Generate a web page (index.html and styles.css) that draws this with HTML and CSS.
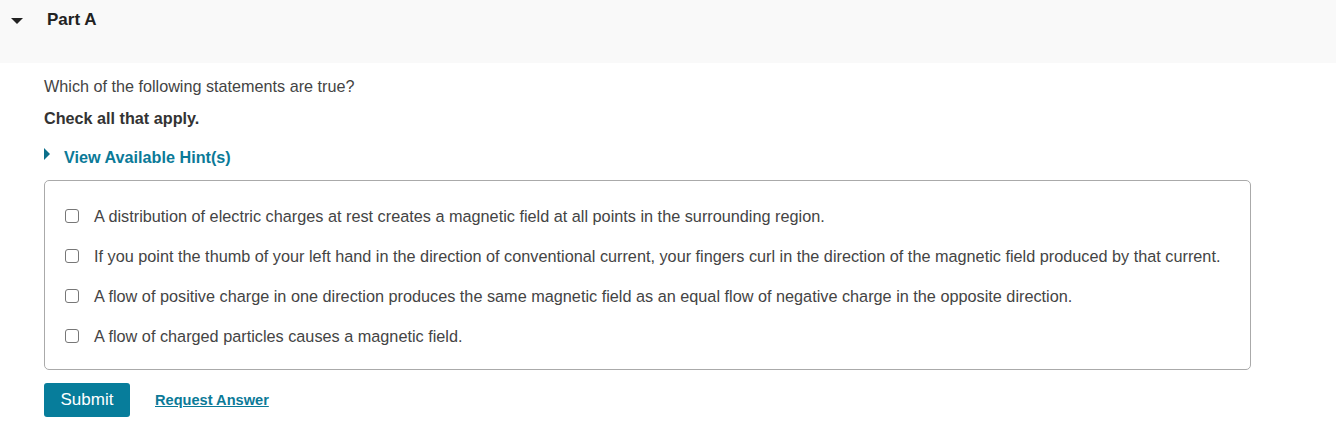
FILE: index.html
```html
<!DOCTYPE html>
<html>
<head>
<meta charset="utf-8">
<link rel="stylesheet" href="styles.css">
</head>
<body>
<div class="part-header">
  <span class="caret-down"></span>
  <span class="part-title">Part A</span>
</div>
<div class="part-body">
  <p class="question">Which of the following statements are true?</p>
  <p class="instruction">Check all that apply.</p>
  <div class="hint"><span class="caret-right"></span><a class="hint-link">View Available Hint(s)</a></div>
  <div class="answer-box">
    <label class="option"><span class="checkbox"></span><span>A distribution of electric charges at rest creates a magnetic field at all points in the surrounding region.</span></label>
    <label class="option"><span class="checkbox"></span><span>If you point the thumb of your left hand in the direction of conventional current, your fingers curl in the direction of the magnetic field produced by that current.</span></label>
    <label class="option"><span class="checkbox"></span><span>A flow of positive charge in one direction produces the same magnetic field as an equal flow of negative charge in the opposite direction.</span></label>
    <label class="option"><span class="checkbox"></span><span>A flow of charged particles causes a magnetic field.</span></label>
  </div>
  <div class="actions">
    <button class="submit">Submit</button>
    <a class="request">Request Answer</a>
  </div>
</div>
</body>
</html>
```
FILE: styles.css
```css
html, body {
  margin: 0;
  padding: 0;
  background: #fff;
  font-family: "Liberation Sans", Arial, sans-serif;
  color: #333;
}
.part-header {
  height: 63px;
  background: #f9f9f9;
  display: flex;
  align-items: flex-start;
  padding-top: 11px;
  box-sizing: border-box;
}
.caret-down {
  width: 0;
  height: 0;
  border-left: 6px solid transparent;
  border-right: 6px solid transparent;
  border-top: 6px solid #222;
  margin: 7px 0 0 11px;
}
.part-title {
  font-size: 17px;
  font-weight: bold;
  color: #222;
  margin-left: 24px;
  line-height: 18px;
}
.part-body {
  padding-left: 44px;
}
.question {
  margin: 0;
  padding-top: 14px;
  font-size: 16.2px;
  line-height: 18px;
  color: #444;
}
.instruction {
  margin: 14px 0 0 0;
  font-size: 16.2px;
  font-weight: bold;
  line-height: 18px;
}
.hint {
  display: flex;
  align-items: center;
  margin-top: 21px;
  height: 18px;
}
.caret-right {
  width: 0;
  height: 0;
  border-top: 6px solid transparent;
  border-bottom: 6px solid transparent;
  border-left: 6px solid #0b6f8a;
  margin-top: -7px;
}
.hint-link {
  margin-left: 14px;
  font-size: 16.2px;
  font-weight: bold;
  color: #0b7a98;
}
.answer-box {
  margin-top: 14px;
  width: 1207px;
  height: 190px;
  box-sizing: border-box;
  border: 1px solid #aaa;
  border-radius: 5px;
  padding: 27px 0 0 20px;
}
.option {
  display: flex;
  align-items: center;
  font-size: 16.25px;
  line-height: 16px;
  color: #444;
  height: 16px;
  margin-bottom: 24px;
}
.checkbox {
  width: 12px;
  height: 12px;
  border: 1px solid #777;
  border-radius: 3px;
  margin-right: 15px;
  flex: none;
}
.actions {
  display: flex;
  align-items: center;
  margin-top: 13px;
}
.submit {
  width: 86px;
  height: 34px;
  background: #077d9b;
  color: #fff;
  border: none;
  border-radius: 3px;
  font-family: "Liberation Sans", Arial, sans-serif;
  font-size: 17px;
  padding: 0;
}
.request {
  margin-left: 25px;
  font-size: 14.6px;
  font-weight: bold;
  color: #0b7a98;
  text-decoration: underline;
}
```
